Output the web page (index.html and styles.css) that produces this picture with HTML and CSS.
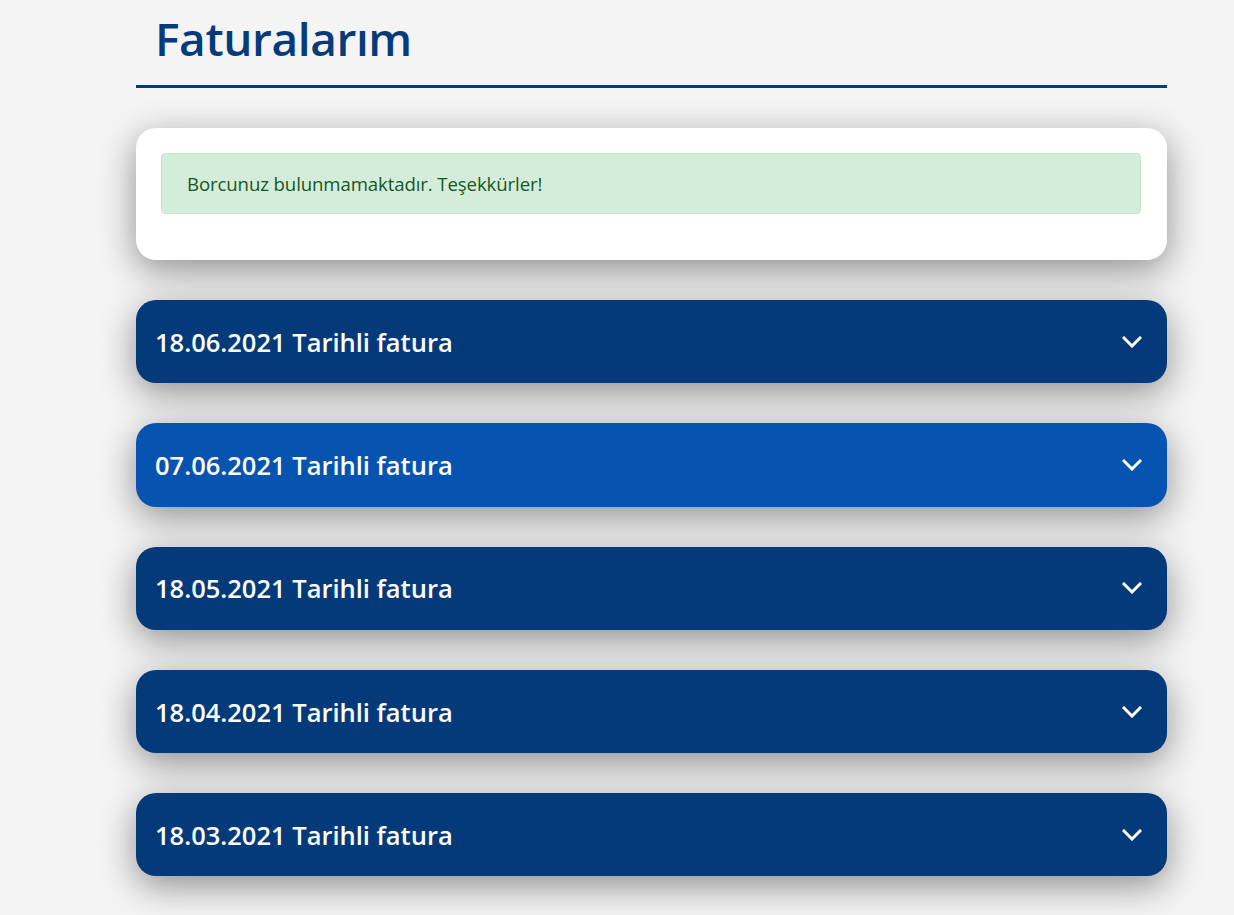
FILE: index.html
```html
<!DOCTYPE html>
<html lang="tr">
<head>
<meta charset="utf-8">
<title>Faturalarım</title>
<link rel="stylesheet" href="styles.css">
</head>
<body>
<main class="page">
  <h1 class="title">Faturalarım</h1>
  <section class="card">
    <div class="alert">Borcunuz bulunmamaktadır. Teşekkürler!</div>
  </section>
  <ul class="invoices">
    <li class="invoice"><span>18.06.2021 Tarihli fatura</span><svg class="chev" viewBox="0 0 20 12"><path d="M2 2 L10 10 L18 2"/></svg></li>
    <li class="invoice invoice--active"><span>07.06.2021 Tarihli fatura</span><svg class="chev" viewBox="0 0 20 12"><path d="M2 2 L10 10 L18 2"/></svg></li>
    <li class="invoice"><span>18.05.2021 Tarihli fatura</span><svg class="chev" viewBox="0 0 20 12"><path d="M2 2 L10 10 L18 2"/></svg></li>
    <li class="invoice"><span>18.04.2021 Tarihli fatura</span><svg class="chev" viewBox="0 0 20 12"><path d="M2 2 L10 10 L18 2"/></svg></li>
    <li class="invoice"><span>18.03.2021 Tarihli fatura</span><svg class="chev" viewBox="0 0 20 12"><path d="M2 2 L10 10 L18 2"/></svg></li>
  </ul>
</main>
</body>
</html>
```
FILE: styles.css
```css
html, body {
  margin: 0;
  padding: 0;
  background: #f4f4f4;
  font-family: "Open Sans", "Noto Sans", sans-serif;
}
.page {
  width: 1031px;
  margin-left: 136px;
  padding-bottom: 60px;
}
.title {
  margin: 0;
  padding: 6px 0 14px 19px;
  font-size: 46px;
  line-height: 65px;
  font-weight: 600;
  color: #063b7b;
  border-bottom: 3px solid #063b7b;
  letter-spacing: -0.4px;
}
.card {
  margin-top: 40px;
  background: #fff;
  border-radius: 20px;
  padding: 25px 26px 30px 25px;
  box-shadow: 0 10px 36px rgba(0, 0, 0, 0.42);
}
.alert {
  margin-bottom: 16px;
  background: #d4edda;
  border: 1px solid #c3e6cb;
  border-radius: 4px;
  color: #155724;
  font-size: 18.6px;
  line-height: 25px;
  padding: 17px 25px 17px;
  letter-spacing: -0.1px;
}
.invoices {
  list-style: none;
  margin: 40px 0 0;
  padding: 0;
  display: flex;
  flex-direction: column;
  gap: 40px;
}
.invoice {
  height: 83.3px;
  box-sizing: border-box;
  background: #053a7a;
  border-radius: 20px;
  display: flex;
  align-items: center;
  justify-content: space-between;
  padding: 0 25px 0 19px;
  color: #fff;
  font-size: 25.5px;
  font-weight: 600;
  box-shadow: 0 10px 36px rgba(0, 0, 0, 0.42);
}
.invoice--active {
  background: #0654b0;
}
.chev {
  width: 20px;
  height: 12px;
  fill: none;
  stroke: #fff;
  stroke-width: 3;
  stroke-linecap: square;
}
```
